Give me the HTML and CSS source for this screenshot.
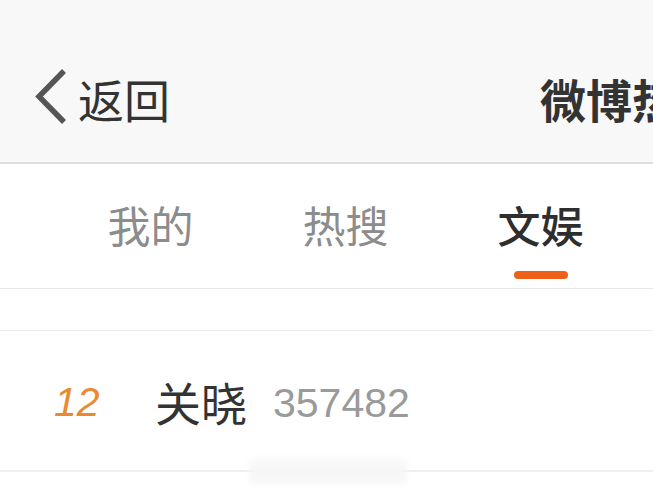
FILE: index.html
```html
<!DOCTYPE html>
<html lang="zh">
<head>
<meta charset="utf-8">
<link rel="stylesheet" href="styles.css">
</head>
<body>
<div class="page">
  <header class="topbar">
    <div class="back">
      <svg class="chev" width="34" height="58" viewBox="0 0 34 58">
        <polyline points="30,3 5,28.5 30,54" fill="none" stroke="#555" stroke-width="5.5" stroke-linecap="butt" stroke-linejoin="miter"/>
      </svg>
      <span class="back-text">返回</span>
    </div>
    <div class="title">微博热搜</div>
  </header>
  <nav class="tabs">
    <div class="tab"><span class="tab-label">我的</span><span class="ind"></span></div>
    <div class="tab"><span class="tab-label">热搜</span><span class="ind"></span></div>
    <div class="tab active"><span class="tab-label">文娱</span><span class="ind"></span></div>
  </nav>
  <div class="spacer"></div>
  <div class="row">
    <span class="rank">12</span>
    <span class="name">关晓</span>
    <span class="count">357482</span>
  </div>
  <div class="ghost"></div>
</div>
</body>
</html>
```
FILE: styles.css
```css
html, body {
  margin: 0;
  padding: 0;
  background: #ffffff;
}
body {
  width: 653px;
  height: 487px;
  overflow: hidden;
  font-family: "Noto Sans CJK SC", "Noto Sans", sans-serif;
}
.page {
  position: relative;
  width: 653px;
}
.topbar {
  height: 164px;
  box-sizing: border-box;
  background: #f8f8f8;
  border-bottom: 2px solid #dddddd;
  display: flex;
  align-items: center;
  padding-top: 34px;
  padding-left: 34px;
  white-space: nowrap;
  overflow: hidden;
}
.back {
  display: flex;
  align-items: center;
  width: 506px;
  flex: none;
}
.chev {
  display: block;
  flex: none;
  margin-top: -2px;
}
.back-text {
  margin-left: 10px;
  font-size: 46px;
  line-height: 50px;
  color: #333333;
}
.title {
  font-size: 46px;
  line-height: 50px;
  font-weight: 700;
  color: #333333;
  flex: none;
}
.tabs {
  display: flex;
  height: 125px;
  box-sizing: border-box;
  border-bottom: 1px solid #e6e6e6;
  padding-left: 53px;
}
.tab {
  width: 195px;
  display: flex;
  flex-direction: column;
  align-items: center;
  padding-top: 37px;
}
.tab-label {
  font-size: 43px;
  line-height: 46px;
  color: #8c8c8c;
}
.ind {
  width: 54px;
  height: 8px;
  margin-top: 24px;
  border-radius: 4px;
  background: transparent;
}
.tab.active .tab-label {
  color: #2e2e2e;
  font-weight: 500;
}
.tab.active .ind {
  background: #ee5f18;
}
.spacer {
  height: 41px;
  border-bottom: 1px solid #ececec;
}
.row {
  height: 141px;
  box-sizing: border-box;
  border-bottom: 2px solid #efefef;
  display: flex;
  align-items: center;
  padding-left: 54px;
}
.rank {
  width: 101px;
  font-family: "Liberation Sans", Arial, sans-serif;
  font-style: italic;
  font-size: 41px;
  color: #ea8a30;
  margin-top: 4px;
}
.name {
  font-size: 46px;
  line-height: 50px;
  color: #333333;
}
.count {
  margin-left: 26px;
  font-family: "Liberation Sans", Arial, sans-serif;
  font-size: 41px;
  color: #9a9a9a;
  margin-top: 6px;
}
.ghost {
  position: absolute;
  left: 250px;
  top: 460px;
  width: 156px;
  height: 24px;
  background: #f6f6f6;
  filter: blur(4px);
}
```
